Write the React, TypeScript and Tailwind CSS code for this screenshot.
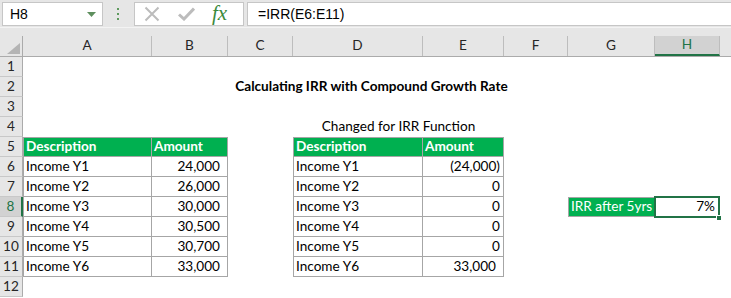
import React from "react";

const GRID =
  "grid grid-cols-[23px_129px_76px_65px_130px_81px_64px_87px_65px_1fr]";

type Cell = {
  col: number; // 1..8 for A..H
  span?: number;
  text?: string;
  kind?: "head" | "body" | "label" | "title" | "sub" | "sel";
  align?: "left" | "right" | "center";
  pr?: string;
  top?: boolean;
  left?: boolean;
};

const rows: Record<number, Cell[]> = {
  2: [{ col: 1, span: 8, text: "Calculating IRR with Compound Growth Rate", kind: "title", align: "center" }],
  4: [{ col: 4, span: 2, text: "Changed for IRR Function", kind: "sub", align: "center" }],
  5: [
    { col: 1, text: "Description", kind: "head", top: true, left: true },
    { col: 2, text: "Amount", kind: "head", top: true },
    { col: 4, text: "Description", kind: "head", top: true, left: true },
    { col: 5, text: "Amount", kind: "head", top: true },
  ],
  6: [
    { col: 1, text: "Income Y1", kind: "body", left: true },
    { col: 2, text: "24,000", kind: "body", align: "right", pr: "pr-[7px]" },
    { col: 4, text: "Income Y1", kind: "body", left: true },
    { col: 5, text: "(24,000)", kind: "body", align: "right", pr: "pr-[3px]" },
  ],
  7: [
    { col: 1, text: "Income Y2", kind: "body", left: true },
    { col: 2, text: "26,000", kind: "body", align: "right", pr: "pr-[7px]" },
    { col: 4, text: "Income Y2", kind: "body", left: true },
    { col: 5, text: "0", kind: "body", align: "right", pr: "pr-[3px]" },
  ],
  8: [
    { col: 1, text: "Income Y3", kind: "body", left: true },
    { col: 2, text: "30,000", kind: "body", align: "right", pr: "pr-[7px]" },
    { col: 4, text: "Income Y3", kind: "body", left: true },
    { col: 5, text: "0", kind: "body", align: "right", pr: "pr-[3px]" },
    { col: 7, text: "IRR after 5yrs", kind: "label", top: true, left: true },
    { col: 8, text: "7%", kind: "sel", align: "right" },
  ],
  9: [
    { col: 1, text: "Income Y4", kind: "body", left: true },
    { col: 2, text: "30,500", kind: "body", align: "right", pr: "pr-[7px]" },
    { col: 4, text: "Income Y4", kind: "body", left: true },
    { col: 5, text: "0", kind: "body", align: "right", pr: "pr-[3px]" },
  ],
  10: [
    { col: 1, text: "Income Y5", kind: "body", left: true },
    { col: 2, text: "30,700", kind: "body", align: "right", pr: "pr-[7px]" },
    { col: 4, text: "Income Y5", kind: "body", left: true },
    { col: 5, text: "0", kind: "body", align: "right", pr: "pr-[3px]" },
  ],
  11: [
    { col: 1, text: "Income Y6", kind: "body", left: true },
    { col: 2, text: "33,000", kind: "body", align: "right", pr: "pr-[7px]" },
    { col: 4, text: "Income Y6", kind: "body", left: true },
    { col: 5, text: "33,000", kind: "body", align: "right", pr: "pr-[7px]" },
  ],
};

const colStart: Record<number, string> = {
  1: "col-start-2",
  2: "col-start-3",
  3: "col-start-4",
  4: "col-start-5",
  5: "col-start-6",
  6: "col-start-7",
  7: "col-start-8",
  8: "col-start-9",
};
const colSpan: Record<number, string> = {
  1: "col-span-1",
  2: "col-span-2",
  8: "col-span-8",
};

function SheetCell({ c }: { c: Cell }) {
  const base = `${colStart[c.col]} ${colSpan[c.span ?? 1]} row-start-1 h-[20px] flex items-center whitespace-nowrap relative`;
  const align =
    c.align === "right" ? "justify-end" : c.align === "center" ? "justify-center" : "justify-start pl-[2px]";
  let look = "";
  if (c.kind === "head")
    look = `bg-[#00b050] text-white font-bold border-[#a6a6a6] border-r border-b ${c.top ? "border-t" : ""} ${c.left ? "border-l" : ""}`;
  else if (c.kind === "body")
    look = `bg-white text-black border-[#a6a6a6] border-r border-b ${c.left ? "border-l" : ""}`;
  else if (c.kind === "label")
    look = "bg-[#00b050] text-white border-[#a6a6a6] border";
  else if (c.kind === "title") look = "font-bold text-black";
  else if (c.kind === "sub") look = "text-black";
  else if (c.kind === "sel") look = "";
  if (c.kind === "sel") {
    return (
      <div className={`${colStart[c.col]} col-span-1 row-start-1 h-[20px] relative`}>
        <div className="absolute left-[-1px] top-[-1px] w-[66px] h-[22px] border-2 border-[#217346] bg-white flex items-center justify-end pr-[3px] text-black">
          7%
        </div>
        <div className="absolute left-[61px] top-[18px] w-[6px] h-[6px] bg-[#217346] border border-white" />
      </div>
    );
  }
  return <div className={`${base} ${align} ${look} ${c.pr ?? ""}`}>{c.text}</div>;
}

const colLetters = ["A", "B", "C", "D", "E", "F", "G", "H"];

export default function App() {
  return (
    <div
      className="w-[731px] h-[298px] overflow-hidden bg-white text-[13.6px] leading-none"
      style={{ fontFamily: "Lato, 'Liberation Sans', sans-serif" }}
    >
      {/* Formula bar */}
      <div className="h-[28px] bg-[#e6e6e6] border-b border-[#f3f3f3] flex items-start pt-[2px]">
        <div className="ml-[2px] w-[101px] h-[24px] bg-white border border-[#c6c6c6] flex items-center justify-between pl-[7px] pr-[6px]">
          <span className="text-[14px] text-black" style={{ fontFamily: "'Liberation Sans', sans-serif" }}>H8</span>
          <svg width="9" height="5" viewBox="0 0 9 5">
            <polygon points="0,0 9,0 4.5,5" fill="#5e8f5e" />
          </svg>
        </div>
        <div className="w-[30px] h-[24px] flex items-center justify-center">
          <svg width="3" height="12" viewBox="0 0 3 12">
            <rect x="0" y="0" width="2" height="2" fill="#5e9a5e" />
            <rect x="0" y="5" width="2" height="2" fill="#5e9a5e" />
            <rect x="0" y="10" width="2" height="2" fill="#5e9a5e" />
          </svg>
        </div>
        <div className="ml-[1px] w-[110px] h-[24px] bg-white border border-[#c6c6c6] flex items-center">
          <svg className="ml-[9px]" width="16" height="16" viewBox="0 0 16 16">
            <path d="M1.5 1.5 L14.5 14.5 M14.5 1.5 L1.5 14.5" stroke="#bcbcbc" strokeWidth="2" fill="none" />
          </svg>
          <svg className="ml-[18px]" width="17" height="14" viewBox="0 0 17 14">
            <path d="M1 7.5 L6 12 L16 1.5" stroke="#bcbcbc" strokeWidth="3" fill="none" />
          </svg>
          <span
            className="ml-[17px] text-[#3b8a3b] italic text-[21px] leading-none -mt-[2px]"
            style={{ fontFamily: "'Liberation Serif', serif" }}
          >
            fx
          </span>
        </div>
        <div className="ml-[3px] flex-1 h-[24px] bg-white border-l border-t border-b border-[#c6c6c6] flex items-center pl-[10px]">
          <span className="text-[14px] text-black" style={{ fontFamily: "'Liberation Sans', sans-serif" }}>
            =IRR(E6:E11)
          </span>
        </div>
      </div>
      <div className="h-[8px] bg-[#e6e6e6]" />
      {/* Column headers */}
      <div className={`${GRID} h-[21px] bg-[#e6e6e6] border-b border-[#ababab]`}>
        <div className="relative border-r border-[#ababab]">
          <svg className="absolute left-[7px] top-[7px]" width="13" height="11" viewBox="0 0 13 11">
            <polygon points="13,0 13,11 0,11" fill="#b4b4b4" />
          </svg>
        </div>
        {colLetters.map((l) => (
          <div
            key={l}
            className={
              l === "H"
                ? "bg-[#d2d2d2] text-[#217346] border-b-2 border-[#217346] border-r border-r-[#bdbdbd] flex items-center justify-center"
                : "border-r border-[#bdbdbd] flex items-center justify-center text-[#262626]"
            }
          >
            {l}
          </div>
        ))}
        <div />
      </div>
      {/* Rows */}
      {Array.from({ length: 12 }, (_, i) => i + 1).map((r) => (
        <div key={r} className={`${GRID} h-[20px]`}>
          <div
            className={
              r === 8
                ? "row-start-1 col-start-1 bg-[#d2d2d2] text-[#217346] border-r-2 border-[#217346] border-b border-b-[#c8c8c8] flex items-center justify-center"
                : "row-start-1 col-start-1 bg-[#e6e6e6] text-[#262626] border-r border-[#ababab] border-b border-b-[#c8c8c8] flex items-center justify-center"
            }
          >
            {r}
          </div>
          {(rows[r] ?? []).map((c, idx) => (
            <SheetCell key={idx} c={c} />
          ))}
        </div>
      ))}
    </div>
  );
}
